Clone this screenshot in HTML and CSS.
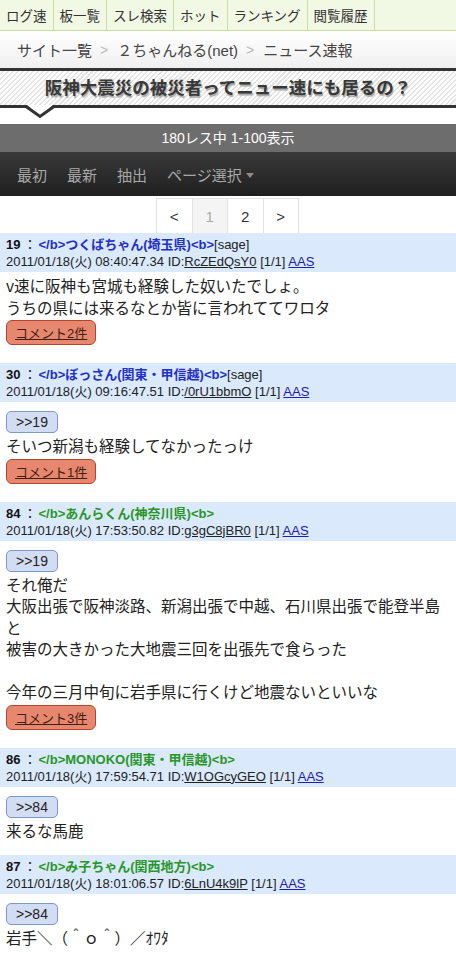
FILE: index.html
```html
<!DOCTYPE html>
<html lang="ja">
<head>
<meta charset="utf-8">
<title>阪神大震災の被災者ってニュー速にも居るの？</title>
<link rel="stylesheet" href="styles.css">
</head>
<body>
<nav class="tabs">
  <a class="tab">ログ速</a>
  <a class="tab">板一覧</a>
  <a class="tab">スレ検索</a>
  <a class="tab">ホット</a>
  <a class="tab">ランキング</a>
  <a class="tab">閲覧履歴</a>
  <span class="tab-fill"></span>
</nav>
<div class="crumbs">
  <a>サイト一覧</a><span class="sep">&gt;</span><a>２ちゃんねる(net)</a><span class="sep">&gt;</span><a>ニュース速報</a>
</div>
<div class="banner">
  <h1>阪神大震災の被災者ってニュー速にも居るの？</h1>
  <svg class="notch" width="26" height="14" viewBox="0 0 26 14"><polygon points="0,0 13,11 26,0" fill="#fff"/><polyline points="-1,1.5 13,11.5 27,1.5" fill="none" stroke="#333" stroke-width="3"/></svg>
</div>
<div class="count">180レス中 1-100表示</div>
<div class="toolbar">
  <a>最初</a><a>最新</a><a>抽出</a><a>ページ選択<span class="caret"></span></a>
</div>
<div class="pager">
  <a class="pg">&lt;</a><a class="pg cur">1</a><a class="pg">2</a><a class="pg">&gt;</a>
</div>

<article class="post">
  <div class="head">
    <div><b class="num">19</b><span class="colon">：</span><b class="name blue">&lt;/b&gt;つくばちゃん(埼玉県)&lt;b&gt;</b>[sage]</div>
    <div>2011/01/18(火) 08:40:47.34 ID:<u>RcZEdQsY0</u> [1/1] <a class="aas">AAS</a></div>
  </div>
  <div class="body">
    <p>v速に阪神も宮城も経験した奴いたでしょ。<br>うちの県には来るなとか皆に言われててワロタ</p>
    <a class="cmt">コメント2件</a>
  </div>
</article>

<article class="post">
  <div class="head">
    <div><b class="num">30</b><span class="colon">：</span><b class="name blue">&lt;/b&gt;ぼっさん(関東・甲信越)&lt;b&gt;</b>[sage]</div>
    <div>2011/01/18(火) 09:16:47.51 ID:<u>/0rU1bbmO</u> [1/1] <a class="aas">AAS</a></div>
  </div>
  <div class="body">
    <a class="reply">&gt;&gt;19</a>
    <p>そいつ新潟も経験してなかったっけ</p>
    <a class="cmt">コメント1件</a>
  </div>
</article>

<article class="post">
  <div class="head">
    <div><b class="num">84</b><span class="colon">：</span><b class="name green">&lt;/b&gt;あんらくん(神奈川県)&lt;b&gt;</b></div>
    <div>2011/01/18(火) 17:53:50.82 ID:<u>g3gC8jBR0</u> [1/1] <a class="aas">AAS</a></div>
  </div>
  <div class="body">
    <a class="reply">&gt;&gt;19</a>
    <p>それ俺だ<br>大阪出張で阪神淡路、新潟出張で中越、石川県出張で能登半島と<br>被害の大きかった大地震三回を出張先で食らった<br><br>今年の三月中旬に岩手県に行くけど地震ないといいな</p>
    <a class="cmt">コメント3件</a>
  </div>
</article>

<article class="post">
  <div class="head">
    <div><b class="num">86</b><span class="colon">：</span><b class="name green">&lt;/b&gt;MONOKO(関東・甲信越)&lt;b&gt;</b></div>
    <div>2011/01/18(火) 17:59:54.71 ID:<u>W1OGcyGEO</u> [1/1] <a class="aas">AAS</a></div>
  </div>
  <div class="body">
    <a class="reply">&gt;&gt;84</a>
    <p>来るな馬鹿</p>
  </div>
</article>

<article class="post">
  <div class="head">
    <div><b class="num">87</b><span class="colon">：</span><b class="name green">&lt;/b&gt;み子ちゃん(関西地方)&lt;b&gt;</b></div>
    <div>2011/01/18(火) 18:01:06.57 ID:<u>6LnU4k9lP</u> [1/1] <a class="aas">AAS</a></div>
  </div>
  <div class="body">
    <a class="reply">&gt;&gt;84</a>
    <p>岩手＼（＾ｏ＾）／ｵﾜﾀ</p>
  </div>
</article>
</body>
</html>
```

FILE: styles.css
```css
* { box-sizing: border-box; }
html, body { margin: 0; padding: 0; background: #fff; }
body {
  width: 456px;
  font-family: "Liberation Sans", "Noto Sans CJK JP", sans-serif;
  color: #222;
}
a { color: inherit; text-decoration: none; }

/* top tabs */
.tabs {
  display: flex;
  height: 31px;
  background: #f1f8e4;
  border-bottom: 1px solid #c9dea2;
}
.tab {
  display: flex;
  align-items: center;
  padding: 0 6px;
  font-size: 13.5px;
  color: #333;
  border-right: 1px solid #c9dea2;
}
.tab-fill { flex: 1; }

/* breadcrumbs */
.crumbs {
  display: flex;
  align-items: center;
  height: 37px;
  padding-left: 17px;
  font-size: 15px;
  color: #444;
  background: linear-gradient(#ffffff, #f0f0f0);
}
.crumbs .sep {
  color: #bbb;
  margin: 0 9px 0 8px;
  font-size: 14px;
}

/* title banner */
.banner {
  position: relative;
  height: 40px;
  border-top: 3px solid #333;
  border-bottom: 3px solid #333;
  background: repeating-linear-gradient(135deg, #ffffff 0 2px, #e4e4e4 2px 3.5px);
  margin-bottom: 16px;
}
.banner h1 {
  margin: 0;
  font-size: 17.5px;
  line-height: 34px;
  font-weight: bold;
  text-align: center;
  color: #383838;
  text-shadow: 1px 2px 1px #a8a8a8;
}
.notch {
  position: absolute;
  left: 27px;
  top: 100%;
  display: block;
  overflow: visible;
}

/* count bar */
.count {
  height: 28px;
  line-height: 28px;
  background: #6d6d6d;
  color: #fff;
  font-size: 14px;
  text-align: center;
}

/* toolbar */
.toolbar {
  display: flex;
  align-items: center;
  gap: 20px;
  height: 44px;
  padding-left: 17px;
  background: linear-gradient(#3a3a3a, #1f1f1f);
  color: #a8a8a8;
  font-size: 15px;
}
.toolbar a { display: flex; align-items: center; }
.caret {
  display: inline-block;
  margin-left: 4px;
  margin-top: 2px;
  border-left: 4px solid transparent;
  border-right: 4px solid transparent;
  border-top: 5px solid #8a8a8a;
}

/* pager */
.pager {
  display: flex;
  justify-content: center;
  margin-top: 2px;
}
.pg {
  display: flex;
  align-items: center;
  justify-content: center;
  width: 36.5px;
  height: 35px;
  border: 1px solid #e2e2e2;
  border-bottom: 0;
  margin-left: -1px;
  font-size: 15px;
  color: #333;
  background: #fff;
}
.pg.cur { background: #f4f4f4; color: #aaa; }

/* posts */
.head {
  background: #dae9fb;
  padding: 3px 6px 2px;
  font-size: 13px;
  line-height: 17px;
  color: #222;
}
.num { color: #111; }
.colon { margin: 0 2px 0 3px; }
.name { font-weight: bold; }
.name.blue { color: #2230c8; }
.name.green { color: #2a9628; }
.head u { text-decoration: underline; }
.aas { color: #2020b0; text-decoration: underline; }

.body {
  padding: 3px 6px 14px;
}
.body p {
  margin: 0;
  font-size: 15.5px;
  line-height: 21.5px;
  color: #222;
  font-family: "Noto Sans CJK JP", "Liberation Sans", sans-serif;
}
.reply {
  display: inline-flex;
  align-items: center;
  height: 22px;
  margin-top: 6px;
  margin-bottom: 2px;
  padding: 0 9px;
  font-size: 14px;
  color: #222;
  background: #d2dcf3;
  border: 1px solid #7d98cc;
  border-radius: 5px;
}
.cmt {
  display: inline-flex;
  align-items: center;
  height: 25px;
  margin-top: 2px;
  margin-bottom: 4px;
  padding: 0 8px;
  font-size: 13px;
  color: #40200f;
  text-decoration: underline;
  background: #e8876f;
  border: 1.5px solid #b4432e;
  border-radius: 6px;
}
.body .cmt, .body .reply { vertical-align: top; }
```
